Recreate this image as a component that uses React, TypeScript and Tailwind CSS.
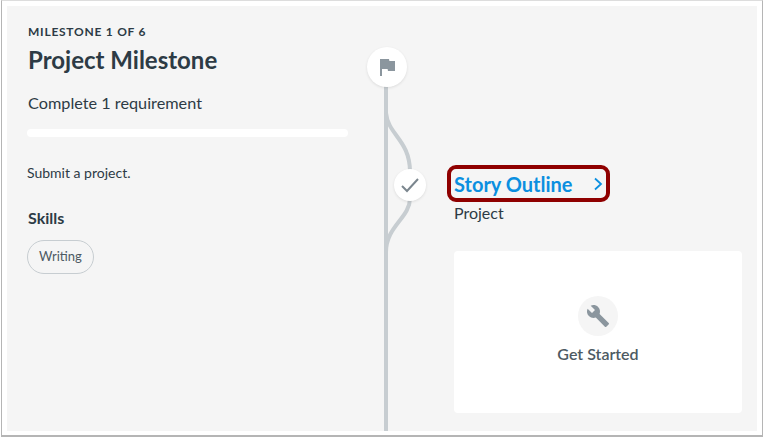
const textDark = 'text-[#2d3b45]'

function FlagIcon() {
  return (
    <svg viewBox="0 0 24 24" className="w-6 h-6 fill-[#8b969e]">
      <path d="M14.4 6L14 4H5v17h2v-7h5.6l.4 2h7V6z" />
    </svg>
  )
}

function WrenchIcon() {
  return (
    <svg viewBox="0 0 24 24" className="w-6 h-6 fill-[#8b969e]">
      <path d="M22.7 19l-9.1-9.1c.9-2.3.4-5-1.5-6.9-2-2-5-2.4-7.4-1.3L9 6 6 9 1.6 4.7C.4 7.1.9 10.1 2.9 12.1c1.9 1.9 4.6 2.4 6.9 1.5l9.1 9.1c.4.4 1 .4 1.4 0l2.3-2.3c.5-.4.5-1.1.1-1.4z" />
    </svg>
  )
}

export default function App() {
  return (
    <div className="w-[764px] h-[439px] bg-white overflow-hidden" style={{ fontFamily: 'Lato, sans-serif' }}>
      <div className="ml-px w-[762px] h-[437px] border border-t-[#dddddd] border-[#b5b5b5] border-b-2 pl-[5px] pt-[5px] pr-[3px]">
        <div className={`w-[750px] h-[425px] bg-[#f5f5f5] flex ${textDark}`}>
          {/* Left column */}
          <div className="w-[341px] pl-5 pt-[19px] flex flex-col shrink-0">
            <div className="text-xs font-bold tracking-[0.75px] leading-[14px] pl-px">MILESTONE 1 OF 6</div>
            <h1 className="text-2xl font-bold leading-7 mt-[7px] pl-px">Project Milestone</h1>
            <div className="text-[16.25px] leading-5 mt-[19px] pl-px">Complete 1 requirement</div>
            <div className="h-2 rounded-full bg-white mt-[16px]" />
            <p className="text-sm leading-[18px] mt-[27px]">Submit a project.</p>
            <div className="text-base font-bold leading-5 mt-[26px] pl-px">Skills</div>
            <div className="mt-[12px]">
              <span className="inline-flex items-center h-[34px] px-[11px] rounded-full border border-[#c7cdd1] text-[13px] text-[#4d5a63]">
                Writing
              </span>
            </div>
          </div>

          {/* Path column */}
          <div className="relative w-[106px] shrink-0">
            <svg viewBox="348 6 106 425" className="absolute inset-0 w-full h-full fill-none stroke-[#c7cdd1]" strokeWidth="4">
              <path d="M386 66V431" />
              <path d="M386 113C388 135 410 140 410 172" />
              <path d="M410 198C410 218 386 226 386 252" />
            </svg>
            <div className="absolute left-[19px] top-[41px] w-10 h-10 rounded-full bg-white shadow-[0_1px_3px_rgba(0,0,0,0.1)] flex items-center justify-center">
              <FlagIcon />
            </div>
            <div className="absolute left-[46px] top-[163px] w-8 h-8 rounded-full bg-white shadow-[0_1px_3px_rgba(0,0,0,0.1)] flex items-center justify-center">
              <svg viewBox="0 0 20 20" className="w-5 h-5 fill-none stroke-[#7b868e]" strokeWidth="2">
                <path d="M2 11l5 5L18 4" />
              </svg>
            </div>
          </div>

          {/* Right column */}
          <div className="w-[288px] shrink-0 pt-[159px] flex flex-col">
            <div className="-ml-[7px] w-[163px] h-[37px] border-4 border-[#8f0000] rounded-[9px] flex items-center justify-between pl-[3px] pr-[3px]">
              <span className="text-xl font-bold text-[#0b8fe0] leading-none">Story Outline</span>
              <svg viewBox="0 0 10 14" className="w-2.5 h-3.5 fill-none stroke-[#0b8fe0]" strokeWidth="1.8">
                <path d="M2 1.5L8 7l-6 5.5" />
              </svg>
            </div>
            <div className="text-base leading-5 mt-px">Project</div>
            <div className="mt-[28px] h-[162px] bg-white rounded flex flex-col items-center pt-[45px]">
              <div className="w-10 h-10 rounded-full bg-[#f5f5f5] flex items-center justify-center">
                <WrenchIcon />
              </div>
              <div className="text-base font-semibold leading-5 mt-2 text-[#4d5a63]">Get Started</div>
            </div>
          </div>
        </div>
      </div>
    </div>
  )
}
